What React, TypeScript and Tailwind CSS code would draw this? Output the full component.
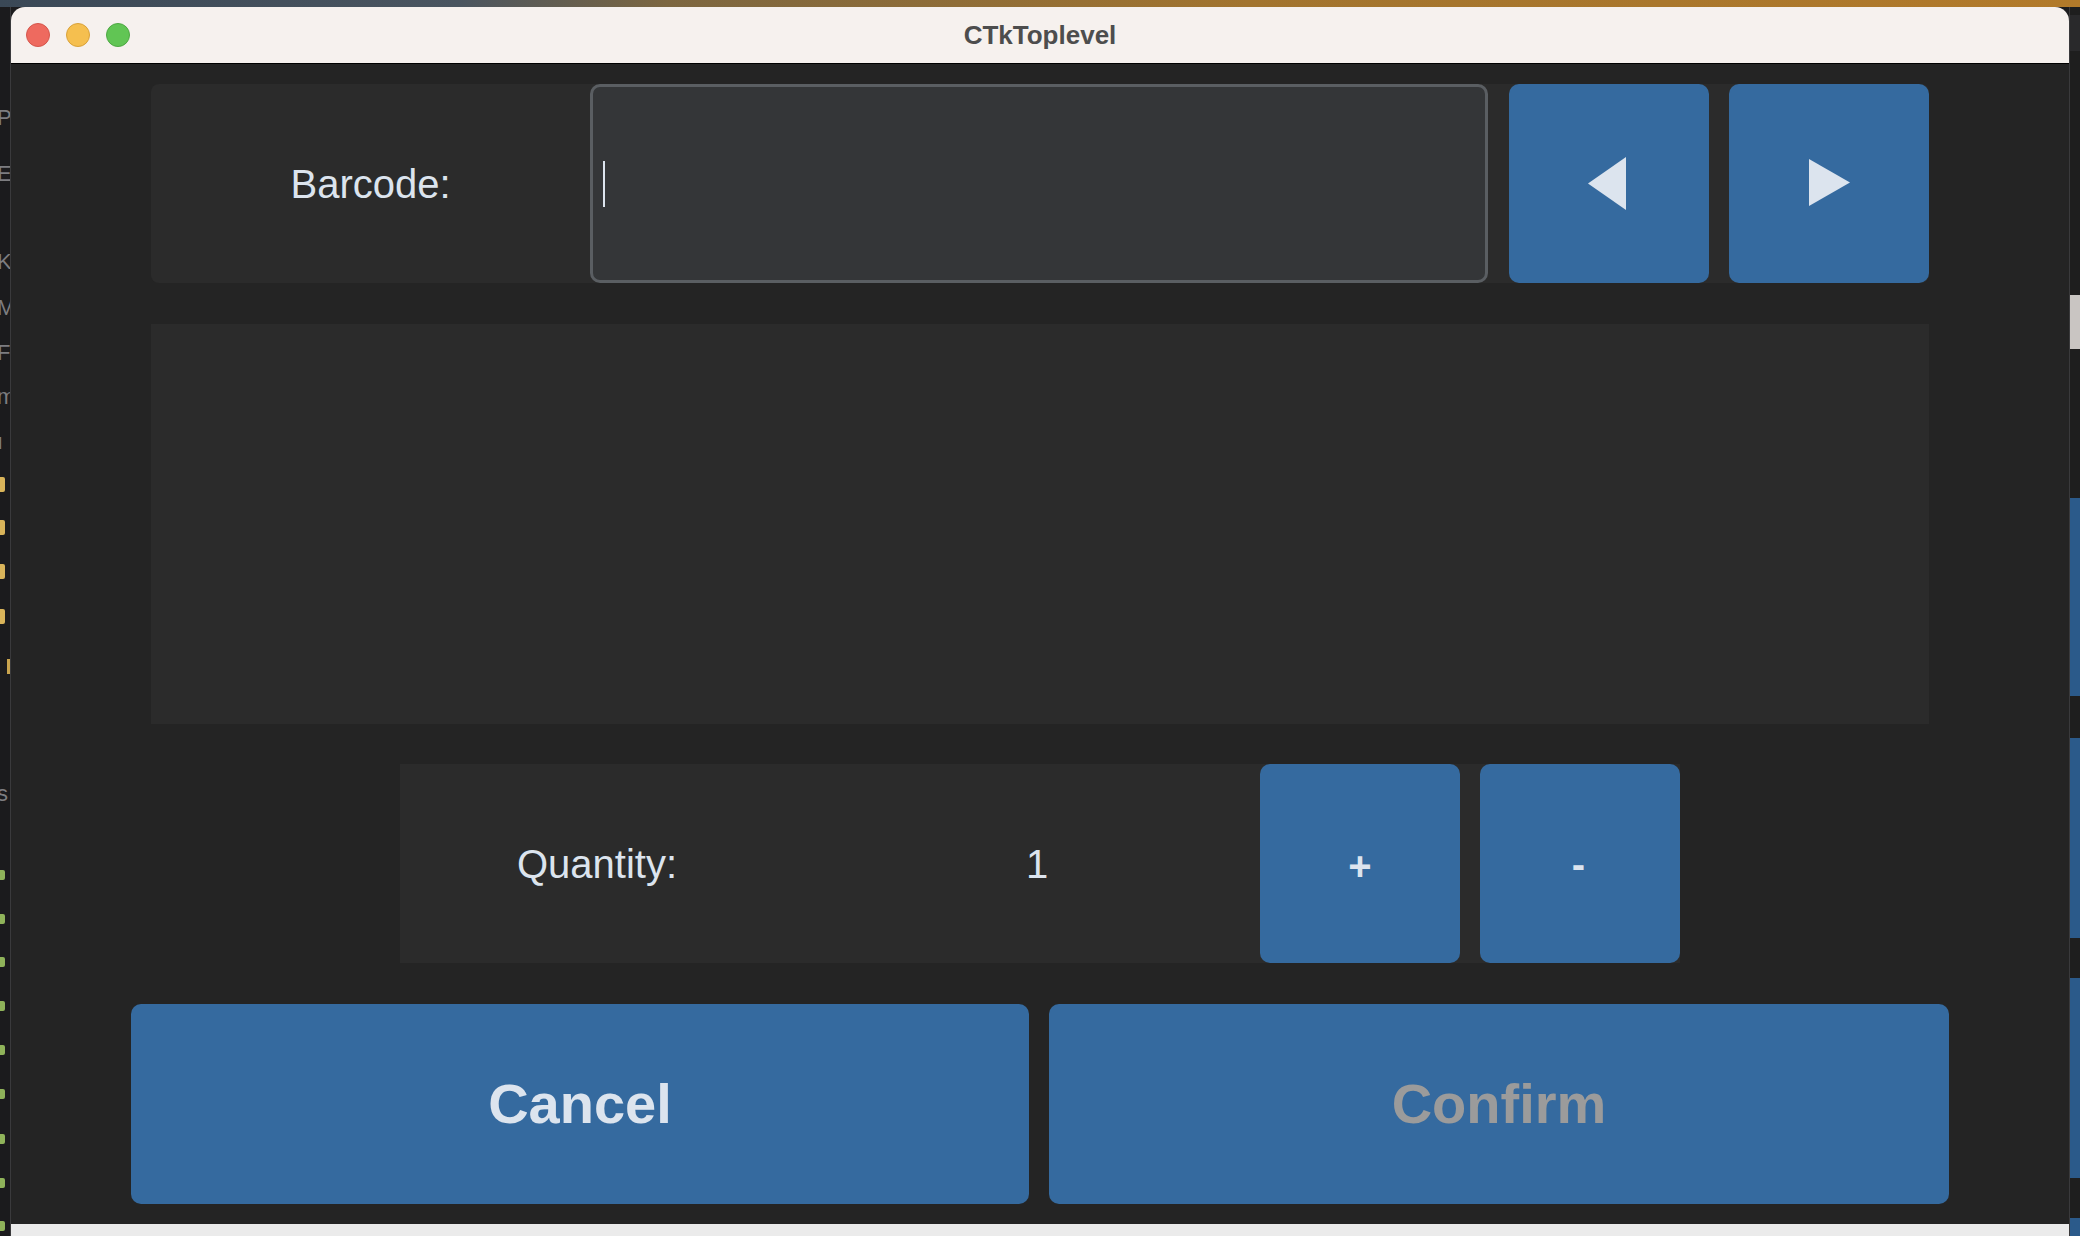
import React from 'react';

const font = "font-['Liberation_Sans',Arial,sans-serif]";

const leftLetters = [
    { y: 100, t: 'PL' },
    { y: 156, t: 'E' },
    { y: 244, t: 'K' },
    { y: 290, t: 'M' },
    { y: 335, t: 'F' },
    { y: 379, t: 'm' },
    { y: 424, t: 'ı' },
    { y: 776, t: 's' },
];
const yellowMarks = [470, 513, 557, 602];
const greenMarks = [863, 907, 950, 994, 1038, 1082, 1127, 1171, 1214];
const rightBlocks = [
    { top: 498, h: 198 },
    { top: 738, h: 200 },
    { top: 978, h: 200 },
    { top: 1218, h: 18 },
];

const BlueButton = ({ children, className = '' }: { children?: React.ReactNode; className?: string }) => (
    <button className={`flex items-center justify-center bg-[#356a9f] rounded-[10px] ${className}`}>
        {children}
    </button>
);

const App = () => {
    return (
        <div className={`relative w-[2080px] h-[1236px] overflow-hidden bg-[#1c1c1e] ${font}`}>
            {/* desktop strip on top */}
            <div className="h-[7px] bg-[linear-gradient(90deg,#3a4856_0%,#4a5560_22%,#7c6640_32%,#a2742e_60%,#b27a2a_100%)]" />

            <div className="flex h-[1229px]">
                {/* other app peeking on the left */}
                <div className="relative w-[10px] h-full bg-[#1b1b1d] overflow-hidden">
                    {leftLetters.map((l) => (
                        <span key={l.y} className="absolute left-[-3px] text-[22px] leading-none text-[#7d7d80]" style={{ top: l.y }}>
                            {l.t}
                        </span>
                    ))}
                    {yellowMarks.map((y) => (
                        <span key={y} className="absolute left-0 w-[5px] h-[15px] rounded-r-[2px] bg-[#d9b45a]" style={{ top: y }} />
                    ))}
                    <span className="absolute left-[7px] top-[652px] w-[3px] h-[15px] bg-[#c9a44e]" />
                    {greenMarks.map((y) => (
                        <span key={y} className="absolute left-0 w-[5px] h-[10px] rounded-r-[2px] bg-[#8fb35a]" style={{ top: y }} />
                    ))}
                </div>

                {/* CTkToplevel window */}
                <div className="w-[2060px] h-full flex flex-col border-x border-[#3a3a3c]">
                    <div className="relative h-[57px] shrink-0 flex items-center bg-[#f6f1ee] border-b border-black rounded-t-[14px]">
                        <div className="flex items-center gap-[16px] pl-[15px]">
                            <span className="w-[24px] h-[24px] rounded-full bg-[#ee6a5f] border border-[#d5564c]" />
                            <span className="w-[24px] h-[24px] rounded-full bg-[#f5bf4f] border border-[#d9a23a]" />
                            <span className="w-[24px] h-[24px] rounded-full bg-[#61c554] border border-[#4ea843]" />
                        </div>
                        <div className="absolute inset-0 flex items-center justify-center pointer-events-none">
                            <span className="text-[26px] font-bold text-[#4d4d4d]">CTkToplevel</span>
                        </div>
                    </div>

                    <div className="flex flex-col flex-1 bg-[#242424] pt-[20px]">
                        {/* barcode row */}
                        <div className="mx-[140px] h-[199px] flex bg-[#2b2b2b] rounded-[8px]">
                            <div className="w-[440px] flex items-center justify-center">
                                <span className="text-[40px] text-[#dce4ee]">Barcode:</span>
                            </div>
                            <div className="w-[899px] h-full flex items-center bg-[#343638] border-[3px] border-[#5a5e62] rounded-[10px] pl-[10px]">
                                <span className="w-[2px] h-[46px] bg-[#dce4ee]" />
                            </div>
                            <div className="flex gap-[20px] ml-[21px]">
                                <BlueButton className="w-[200px] h-[199px]">
                                    <svg width="38" height="53" viewBox="0 0 38 53" className="mr-[4px]">
                                        <polygon points="0,26.5 38,0 38,53" fill="#dce4ee" />
                                    </svg>
                                </BlueButton>
                                <BlueButton className="w-[200px] h-[199px]">
                                    <svg width="41" height="47" viewBox="0 0 41 47" className="mb-[3px]">
                                        <polygon points="0,0 41,23.5 0,47" fill="#dce4ee" />
                                    </svg>
                                </BlueButton>
                            </div>
                        </div>

                        {/* item text area */}
                        <div className="mx-[140px] mt-[41px] h-[400px] bg-[#2b2b2b]" />

                        {/* quantity row */}
                        <div className="mx-auto mt-[40px] w-[1280px] h-[199px] flex bg-[#2b2b2b]">
                            <div className="w-[394px] flex items-center justify-center">
                                <span className="text-[40px] text-[#dce4ee]">Quantity:</span>
                            </div>
                            <div className="w-[466px] pl-[20px] flex items-center justify-center">
                                <span className="text-[40px] text-[#dce4ee]">1</span>
                            </div>
                            <div className="flex gap-[20px]">
                                <BlueButton className="w-[200px] h-[199px]">
                                    <span className="text-[40px] font-bold text-[#dce4ee] leading-none mt-[4px]">+</span>
                                </BlueButton>
                                <BlueButton className="w-[200px] h-[199px]">
                                    <span className="text-[40px] font-bold text-[#dce4ee] leading-none mr-[3px]">-</span>
                                </BlueButton>
                            </div>
                        </div>

                        {/* cancel / confirm */}
                        <div className="mx-[120px] mt-[41px] h-[200px] flex gap-[20px]">
                            <BlueButton className="w-[899px] h-full">
                                <span className="text-[56px] font-bold text-[#dce4ee]">Cancel</span>
                            </BlueButton>
                            <BlueButton className="w-[901px] h-full">
                                <span className="text-[56px] font-bold text-[#9b9b9b]">Confirm</span>
                            </BlueButton>
                        </div>
                    </div>

                    <div className="h-[12px] shrink-0 bg-[#ebebeb]" />
                </div>

                {/* other window on the right */}
                <div className="relative w-[10px] h-full bg-[#1e1e1e]">
                    <span className="absolute left-0 top-[8px] w-full h-[36px] bg-[#29292b]" />
                    <span className="absolute left-0 top-[288px] w-full h-[54px] bg-[#c9c5c2]" />
                    {rightBlocks.map((b) => (
                        <span key={b.top} className="absolute left-0 w-full bg-[#2b5a8a]" style={{ top: b.top - 7, height: b.h }} />
                    ))}
                </div>
            </div>
        </div>
    );
};

export default App;
